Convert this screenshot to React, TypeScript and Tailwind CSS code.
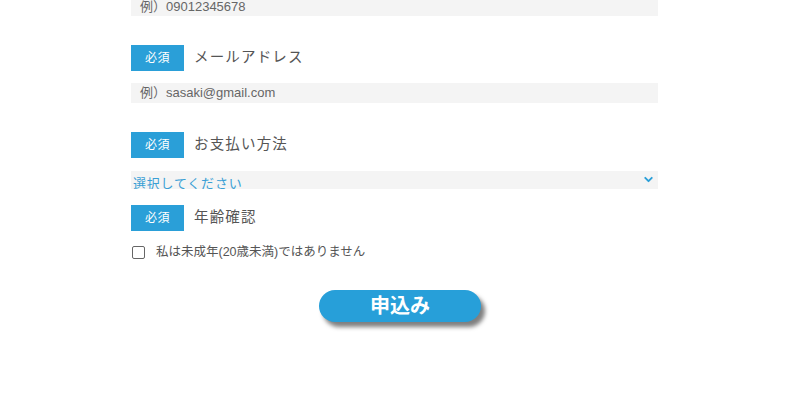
import { ChevronDown } from 'lucide-react'

const font = "font-['Liberation_Sans','Noto_Sans_CJK_JP',sans-serif]"

const Required = ({ label }: { label: string }) => (
  <div className="flex items-center h-[26px]">
    <span className="w-[53px] h-[26px] flex items-center justify-center bg-[#2a9fd8] text-white text-[12px] tracking-[0.05em]">
      必須
    </span>
    <span className="ml-[10px] text-[14.5px] text-[#555] tracking-[0.08em]">{label}</span>
  </div>
)

const App = () => {
  return (
    <div className={`w-[800px] h-[394px] bg-white overflow-hidden ${font}`}>
      <div className="ml-[131px] w-[527px] -mt-[3px]">
        {/* phone */}
        <div className="h-[19px] bg-[#f4f4f4] flex items-center pl-[9px] text-[13px] text-[#666]">
          例）09012345678
        </div>

        {/* email */}
        <div className="mt-[29px]">
          <Required label="メールアドレス" />
        </div>
        <div className="mt-[12px] h-[20px] bg-[#f4f4f4] flex items-center pl-[9px] text-[13px] text-[#666]">
          例）sasaki@gmail.com
        </div>

        {/* payment */}
        <div className="mt-[29px]">
          <Required label="お支払い方法" />
        </div>
        <div className="mt-[13px] h-[18px] bg-[#f4f4f4] relative overflow-hidden">
          <span className="absolute left-[2px] top-[6px] text-[13px] leading-[14px] text-[#3a9fd5] tracking-[0.06em]">
            選択してください
          </span>
          <ChevronDown className="absolute right-[3px] top-[2px] w-[13px] h-[13px] text-[#2a9fd8]" strokeWidth={3.5} />
        </div>

        {/* age */}
        <div className="mt-[16px]">
          <Required label="年齢確認" />
        </div>
        <label className="mt-[14px] flex items-center h-[14px]">
          <span className="ml-[1px] w-[13px] h-[13px] border border-[#666] rounded-[2px] bg-white" />
          <span className="ml-[11px] text-[12.5px] text-[#555]">私は未成年(20歳未満)ではありません</span>
        </label>
      </div>

      <div className="mt-[31px] flex justify-center">
        <button className="w-[162px] h-[32px] rounded-full bg-[#279fd9] text-white text-[20px] font-bold shadow-[4px_5px_4px_rgba(0,0,0,0.5)] flex items-center justify-center">
          申込み
        </button>
      </div>
    </div>
  )
}

export default App
